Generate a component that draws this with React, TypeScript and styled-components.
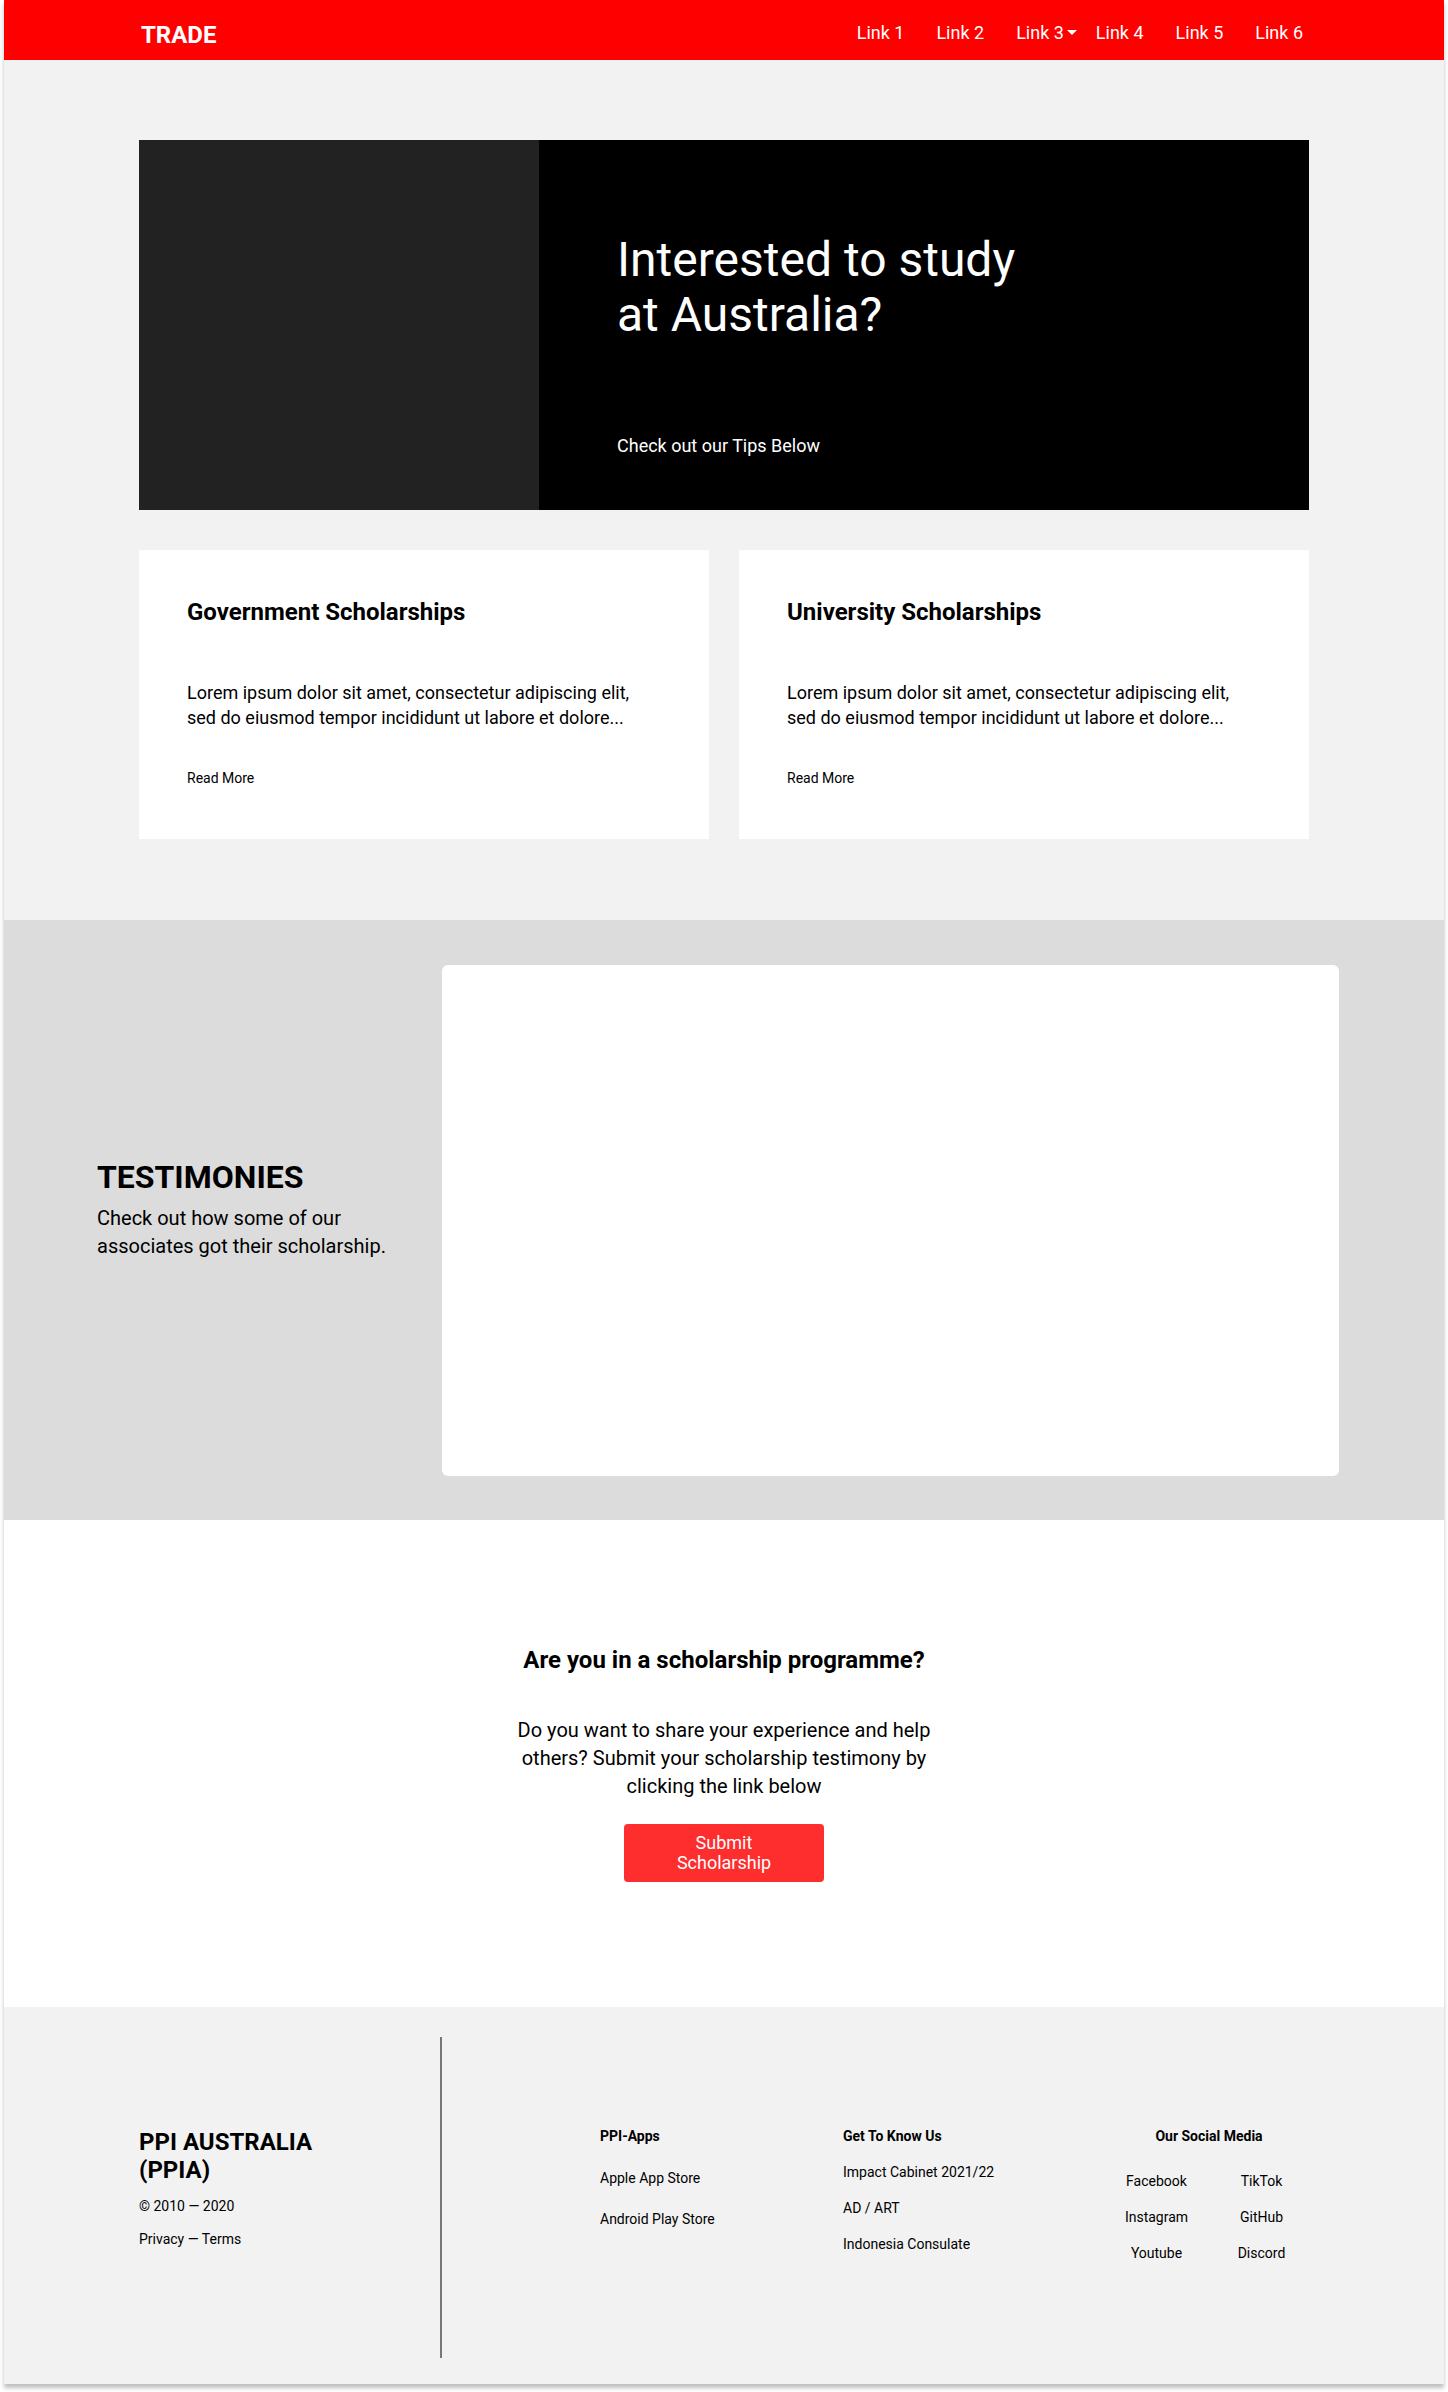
import React from "react";
import styled, { createGlobalStyle } from "styled-components";

const GlobalStyle = createGlobalStyle`
  * { box-sizing: border-box; }
  html, body { margin: 0; padding: 0; background: #ffffff; }
  body { font-family: Roboto, "Liberation Sans", Arial, sans-serif; color: #000; }
`;

const Frame = styled.div`
  width: 1440px;
  margin: 0 auto 8px;
  box-shadow: 0 4px 4px rgba(0, 0, 0, 0.25);
  font-family: Roboto, "Liberation Sans", Arial, sans-serif;
`;

const NavBar = styled.header`
  height: 60px;
  background: #ff0000;
`;

const Container = styled.div`
  width: 1170px;
  margin: 0 auto;
`;

const NavInner = styled(Container)`
  height: 100%;
  display: flex;
  align-items: center;
  justify-content: space-between;
`;

const Brand = styled.div`
  color: #fff;
  font-size: 24px;
  font-weight: 700;
  margin-top: 10px;
  padding-left: 2px;
`;

const NavLinks = styled.nav`
  display: flex;
  gap: 32px;
  padding-right: 6px;
  margin-top: 4px;
`;

const NavLink = styled.a`
  position: relative;
  color: #fff;
  font-size: 18px;
  text-decoration: none;
`;

const Caret = styled.span`
  position: absolute;
  right: -13px;
  top: 50%;
  margin-top: -2px;
  width: 0;
  height: 0;
  border-left: 5px solid transparent;
  border-right: 5px solid transparent;
  border-top: 5px solid #fff;
`;

const Intro = styled.section`
  background: #f2f2f2;
  padding: 80px 0 81px;
`;

const Hero = styled.div`
  height: 370px;
  display: flex;
`;

const HeroImage = styled.div`
  width: 400px;
  background: #222222;
`;

const HeroBody = styled.div`
  flex: 1;
  background: #000;
  color: #fff;
  padding: 92px 78px 0;
`;

const HeroTitle = styled.h1`
  margin: 0;
  font-size: 48px;
  font-weight: 400;
  line-height: 55px;
  max-width: 420px;
`;

const HeroText = styled.p`
  margin: 93px 0 0;
  font-size: 18px;
`;

const CardGrid = styled.div`
  margin-top: 40px;
  display: grid;
  grid-template-columns: 1fr 1fr;
  gap: 30px;
`;

const Card = styled.article`
  height: 289px;
  background: #fff;
  padding: 48px 48px 0;
`;

const CardTitle = styled.h2`
  margin: 0;
  font-size: 24px;
  font-weight: 700;
`;

const CardText = styled.p`
  margin: 54px 0 0;
  font-size: 18px;
  line-height: 25px;
  max-width: 460px;
`;

const ReadMore = styled.a`
  display: block;
  margin-top: 40px;
  font-size: 14px;
  color: #000;
  text-decoration: none;
`;

const Testimonies = styled.section`
  height: 600px;
  background: #dcdcdc;
  display: flex;
  align-items: center;
  padding: 0 105px 0 93px;
`;

const TestiIntro = styled.div`
  width: 300px;
  flex-shrink: 0;
  padding-bottom: 22px;
`;

const TestiTitle = styled.h2`
  margin: 0;
  font-size: 32px;
  font-weight: 700;
`;

const TestiText = styled.p`
  margin: 8px 0 0;
  font-size: 20px;
  line-height: 28px;
`;

const TestiCard = styled.div`
  margin-left: auto;
  width: 897px;
  height: 511px;
  background: #fff;
  border-radius: 6px;
`;

const Cta = styled.section`
  background: #fff;
  padding: 126px 0 125px;
  display: flex;
  flex-direction: column;
  align-items: center;
  text-align: center;
`;

const CtaTitle = styled.h2`
  margin: 0;
  font-size: 24px;
  font-weight: 700;
`;

const CtaText = styled.p`
  margin: 42px 0 0;
  font-size: 20px;
  line-height: 28px;
  max-width: 440px;
`;

const CtaButton = styled.button`
  margin-top: 24px;
  width: 200px;
  padding: 9px 50px;
  border: none;
  border-radius: 4px;
  background: #ff2e2e;
  color: #fff;
  font-family: inherit;
  font-size: 18px;
  line-height: 20px;
  cursor: pointer;
`;

const Footer = styled.footer`
  height: 377px;
  background: #f2f2f2;
`;

const FooterInner = styled(Container)`
  height: 100%;
  display: flex;
  align-items: flex-start;
`;

const FooterBrand = styled.div`
  width: 301px;
  flex-shrink: 0;
  margin-top: 121px;
`;

const FooterName = styled.h2`
  margin: 0;
  font-size: 24px;
  font-weight: 700;
  line-height: 28px;
  max-width: 200px;
`;

const FooterSmall = styled.p<{ $top: number }>`
  margin: ${(p) => p.$top}px 0 0;
  font-size: 14px;
`;

const Divider = styled.div`
  align-self: stretch;
  flex-shrink: 0;
  width: 2px;
  margin: 30px 0 26px;
  background: #777;
`;

const FooterCols = styled.div`
  flex-shrink: 0;
  margin-top: 121px;
  padding-left: 158px;
  display: grid;
  grid-template-columns: 243px 261px 210px;
`;

const Col = styled.div<{ $center?: boolean }>`
  text-align: ${(p) => (p.$center ? "center" : "left")};
`;

const ColTitle = styled.h3`
  margin: 0;
  font-size: 14px;
  font-weight: 700;
`;

const LinkList = styled.div<{ $top: number; $gap: number }>`
  margin-top: ${(p) => p.$top}px;
  display: flex;
  flex-direction: column;
  gap: ${(p) => p.$gap}px;
`;

const SocialGrid = styled.div`
  margin-top: 29px;
  display: grid;
  grid-template-columns: 105px 105px;
  row-gap: 20px;
  text-align: center;
`;

const FooterLink = styled.a`
  font-size: 14px;
  color: #000;
  text-decoration: none;
`;

const links = ["Link 1", "Link 2", "Link 3", "Link 4", "Link 5", "Link 6"];

const cards = ["Government Scholarships", "University Scholarships"];

export default function App() {
  return (
    <>
      <GlobalStyle />
      <Frame>
        <NavBar>
          <NavInner>
            <Brand>TRADE</Brand>
            <NavLinks>
              {links.map((l) => (
                <NavLink key={l} href="#">
                  {l}
                  {l === "Link 3" && <Caret />}
                </NavLink>
              ))}
            </NavLinks>
          </NavInner>
        </NavBar>

        <Intro>
          <Container>
            <Hero>
              <HeroImage />
              <HeroBody>
                <HeroTitle>Interested to study at Australia?</HeroTitle>
                <HeroText>Check out our Tips Below</HeroText>
              </HeroBody>
            </Hero>
            <CardGrid>
              {cards.map((c) => (
                <Card key={c}>
                  <CardTitle>{c}</CardTitle>
                  <CardText>
                    Lorem ipsum dolor sit amet, consectetur adipiscing elit, sed do eiusmod tempor incididunt ut labore et dolore...
                  </CardText>
                  <ReadMore href="#">Read More</ReadMore>
                </Card>
              ))}
            </CardGrid>
          </Container>
        </Intro>

        <Testimonies>
          <TestiIntro>
            <TestiTitle>TESTIMONIES</TestiTitle>
            <TestiText>Check out how some of our associates got their scholarship.</TestiText>
          </TestiIntro>
          <TestiCard />
        </Testimonies>

        <Cta>
          <CtaTitle>Are you in a scholarship programme?</CtaTitle>
          <CtaText>
            Do you want to share your experience and help others? Submit your scholarship testimony by clicking the link below
          </CtaText>
          <CtaButton>Submit Scholarship</CtaButton>
        </Cta>

        <Footer>
          <FooterInner>
            <FooterBrand>
              <FooterName>PPI AUSTRALIA (PPIA)</FooterName>
              <FooterSmall $top={14}>© 2010 — 2020</FooterSmall>
              <FooterSmall $top={17}>Privacy — Terms</FooterSmall>
            </FooterBrand>
            <Divider />
            <FooterCols>
              <Col>
                <ColTitle>PPI-Apps</ColTitle>
                <LinkList $top={26} $gap={25}>
                  <FooterLink href="#">Apple App Store</FooterLink>
                  <FooterLink href="#">Android Play Store</FooterLink>
                </LinkList>
              </Col>
              <Col>
                <ColTitle>Get To Know Us</ColTitle>
                <LinkList $top={20} $gap={20}>
                  <FooterLink href="#">Impact Cabinet 2021/22</FooterLink>
                  <FooterLink href="#">AD / ART</FooterLink>
                  <FooterLink href="#">Indonesia Consulate</FooterLink>
                </LinkList>
              </Col>
              <Col $center>
                <ColTitle>Our Social Media</ColTitle>
                <SocialGrid>
                  <FooterLink href="#">Facebook</FooterLink>
                  <FooterLink href="#">TikTok</FooterLink>
                  <FooterLink href="#">Instagram</FooterLink>
                  <FooterLink href="#">GitHub</FooterLink>
                  <FooterLink href="#">Youtube</FooterLink>
                  <FooterLink href="#">Discord</FooterLink>
                </SocialGrid>
              </Col>
            </FooterCols>
          </FooterInner>
        </Footer>
      </Frame>
    </>
  );
}
